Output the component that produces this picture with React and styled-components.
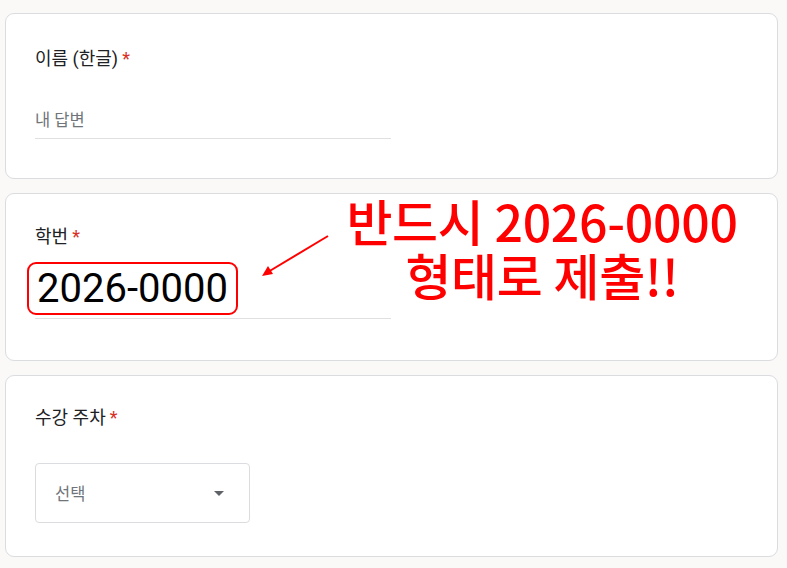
import React from 'react';
import styled, { createGlobalStyle } from 'styled-components';

const GlobalStyle = createGlobalStyle`
  body {
    margin: 0;
    background: #faf9f7;
    font-family: Roboto, "Noto Sans CJK KR", "Noto Sans", sans-serif;
    color: #202124;
  }
`;

const Page = styled.div`
  display: flex;
  flex-direction: column;
  gap: 14px;
  padding: 13px 9px 12px 5px;
  position: relative;
`;

const Card = styled.section`
  background: #fff;
  border: 1px solid #dadce0;
  border-radius: 9px;
  padding: ${p => p.$pad || '32px 29px 39px'};
  display: flex;
  flex-direction: column;
  align-items: flex-start;
  position: relative;
`;

const Label = styled.div`
  font-size: 18px;
  line-height: 26px;
  color: #202124;
  span {
    color: #d93025;
    margin-left: 4px;
  }
`;

const TextInput = styled.div`
  width: 356px;
  margin-top: ${p => p.$top || '38px'};
  border-bottom: 1px solid #e0e0e0;
  padding-bottom: ${p => p.$bottom || '6px'};
  font-size: 16.5px;
  line-height: 22px;
  color: #70757a;
`;

const Answer = styled.span`
  display: inline-block;
  box-sizing: border-box;
  margin-left: -8px;
  padding: 0 8px 0 8px;
  height: 53px;
  line-height: 49px;
  border: 2px solid #f00;
  border-radius: 9px;
  font-family: Roboto, "Noto Sans", sans-serif;
  font-size: 40px;
  color: #000;
`;

const Select = styled.div`
  box-sizing: border-box;
  width: 215px;
  height: 60px;
  margin-top: 32px;
  border: 1px solid #dadce0;
  border-radius: 4px;
  display: flex;
  align-items: center;
  justify-content: space-between;
  padding: 0 25px 0 19px;
  font-size: 16.5px;
  color: #70757a;
`;

const Caret = styled.i`
  width: 0;
  height: 0;
  border-left: 5px solid transparent;
  border-right: 5px solid transparent;
  border-top: 5px solid #5f6368;
`;

const Note = styled.div`
  position: absolute;
  left: 292px;
  top: 193px;
  width: 500px;
  text-align: center;
  color: #ff0000;
  font-family: "Noto Sans CJK KR", sans-serif;
  font-size: 50px;
  font-weight: 500;
  line-height: 54px;
  letter-spacing: -0.3px;
`;

const Arrow = styled.svg`
  position: absolute;
  left: 258px;
  top: 230px;
`;

export default function App() {
  return (
    <>
      <GlobalStyle />
      <Page>
        <Card>
          <Label>이름 (한글)<span>*</span></Label>
          <TextInput>내 답변</TextInput>
        </Card>
        <Card $pad="30px 29px 41px">
          <Label>학번<span>*</span></Label>
          <TextInput $top="12px" $bottom="3px">
            <Answer>2026-0000</Answer>
          </TextInput>
        </Card>
        <Card $pad="29px 29px 33px">
          <Label>수강 주차<span>*</span></Label>
          <Select>
            선택
            <Caret />
          </Select>
        </Card>
        <Note>
          반드시 2026-0000
          <br />
          형태로 제출!!
        </Note>
        <Arrow width="75" height="52" viewBox="0 0 75 52">
          <line x1="70" y1="6" x2="10" y2="42" stroke="#f00" strokeWidth="2" />
          <polygon points="4,46 10,36 15,44" fill="#f00" />
        </Arrow>
      </Page>
    </>
  );
}
